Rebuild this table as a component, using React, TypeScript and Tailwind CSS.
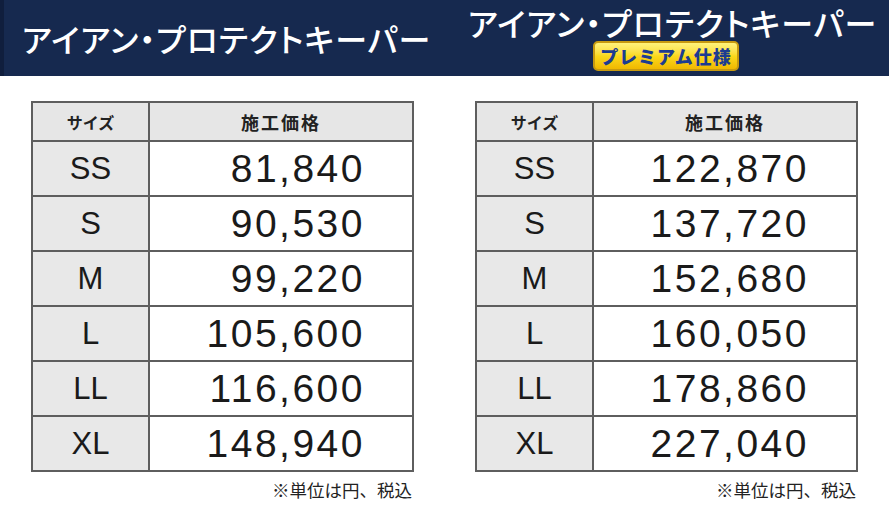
import React from "react";

const jp = { fontFamily: '"Noto Sans CJK JP", "Noto Sans", sans-serif' };
const num = { fontFamily: '"Liberation Sans", Arial, sans-serif' };

type Row = [string, string];

const left: Row[] = [
  ["SS", "81,840"],
  ["S", "90,530"],
  ["M", "99,220"],
  ["L", "105,600"],
  ["LL", "116,600"],
  ["XL", "148,940"],
];
const right: Row[] = [
  ["SS", "122,870"],
  ["S", "137,720"],
  ["M", "152,680"],
  ["L", "160,050"],
  ["LL", "178,860"],
  ["XL", "227,040"],
];

function PriceTable({ rows }: { rows: Row[] }) {
  return (
    <table className="w-[383px] border-collapse border-2 border-[#6e6e6e] table-fixed">
      <colgroup>
        <col className="w-[117px]" />
        <col />
      </colgroup>
      <thead>
        <tr className="h-[39px] bg-[#e6e6e6]">
          <th
            className="border-2 border-[#5e5e5e] text-[16px] font-bold text-[#222] p-0 leading-none"
            style={jp}
          >
            サイズ
          </th>
          <th
            className="border-2 border-[#5e5e5e] text-[18px] font-bold text-[#222] tracking-[2px] p-0 leading-none"
            style={jp}
          >
            施工価格
          </th>
        </tr>
      </thead>
      <tbody>
        {rows.map(([s, p]) => (
          <tr key={s} className="h-[55px]">
            <td
              className="border-2 border-[#5e5e5e] bg-[#e8e8e8] text-center text-[31px] leading-none text-[#1a1a1a] p-0"
              style={num}
            >
              {s}
            </td>
            <td
              className="border-2 border-[#5e5e5e] bg-white text-right text-[39px] leading-none tracking-[2.5px] text-[#1a1a1a] p-0 pr-[47px]"
              style={num}
            >
              {p}
            </td>
          </tr>
        ))}
      </tbody>
    </table>
  );
}

function Note() {
  return (
    <div
      className="w-[383px] text-right text-[17.5px] text-[#222] mt-[9px] pr-[2px] leading-none"
      style={jp}
    >
      ※単位は円、税込
    </div>
  );
}

function Title() {
  return (
    <span
      className="text-white text-[32px] font-medium leading-none whitespace-nowrap tracking-[1px] [font-feature-settings:'palt']"
      style={jp}
    >
      アイアン・プロテクトキーパー
    </span>
  );
}

export default function App() {
  return (
    <div className="w-[889px] h-[516px] bg-white flex overflow-hidden">
      <div className="w-[444px] flex flex-col">
        <div className="h-[76px] bg-[#16294f] border-l-4 border-[#101e3d] flex items-center pl-[18px]">
          <Title />
        </div>
        <div className="pl-[31px] pt-[25px]">
          <PriceTable rows={left} />
          <Note />
        </div>
      </div>
      <div className="w-[445px] flex flex-col">
        <div className="h-[76px] bg-[#16294f] flex flex-col items-start pl-[24px] pt-[6px]">
          <Title />
          <div className="ml-[125px] mt-[3px] h-[30px] w-[146px] rounded-[5px] border-2 border-[#c79a10] bg-gradient-to-b from-[#fff37a] via-[#fbd91a] to-[#f0b800] flex items-center justify-center">
            <span
              className="text-[#1d3c91] text-[18px] font-black leading-none tracking-[1px]"
              style={jp}
            >
              プレミアム仕様
            </span>
          </div>
        </div>
        <div className="pl-[31px] pt-[25px]">
          <PriceTable rows={right} />
          <Note />
        </div>
      </div>
    </div>
  );
}
